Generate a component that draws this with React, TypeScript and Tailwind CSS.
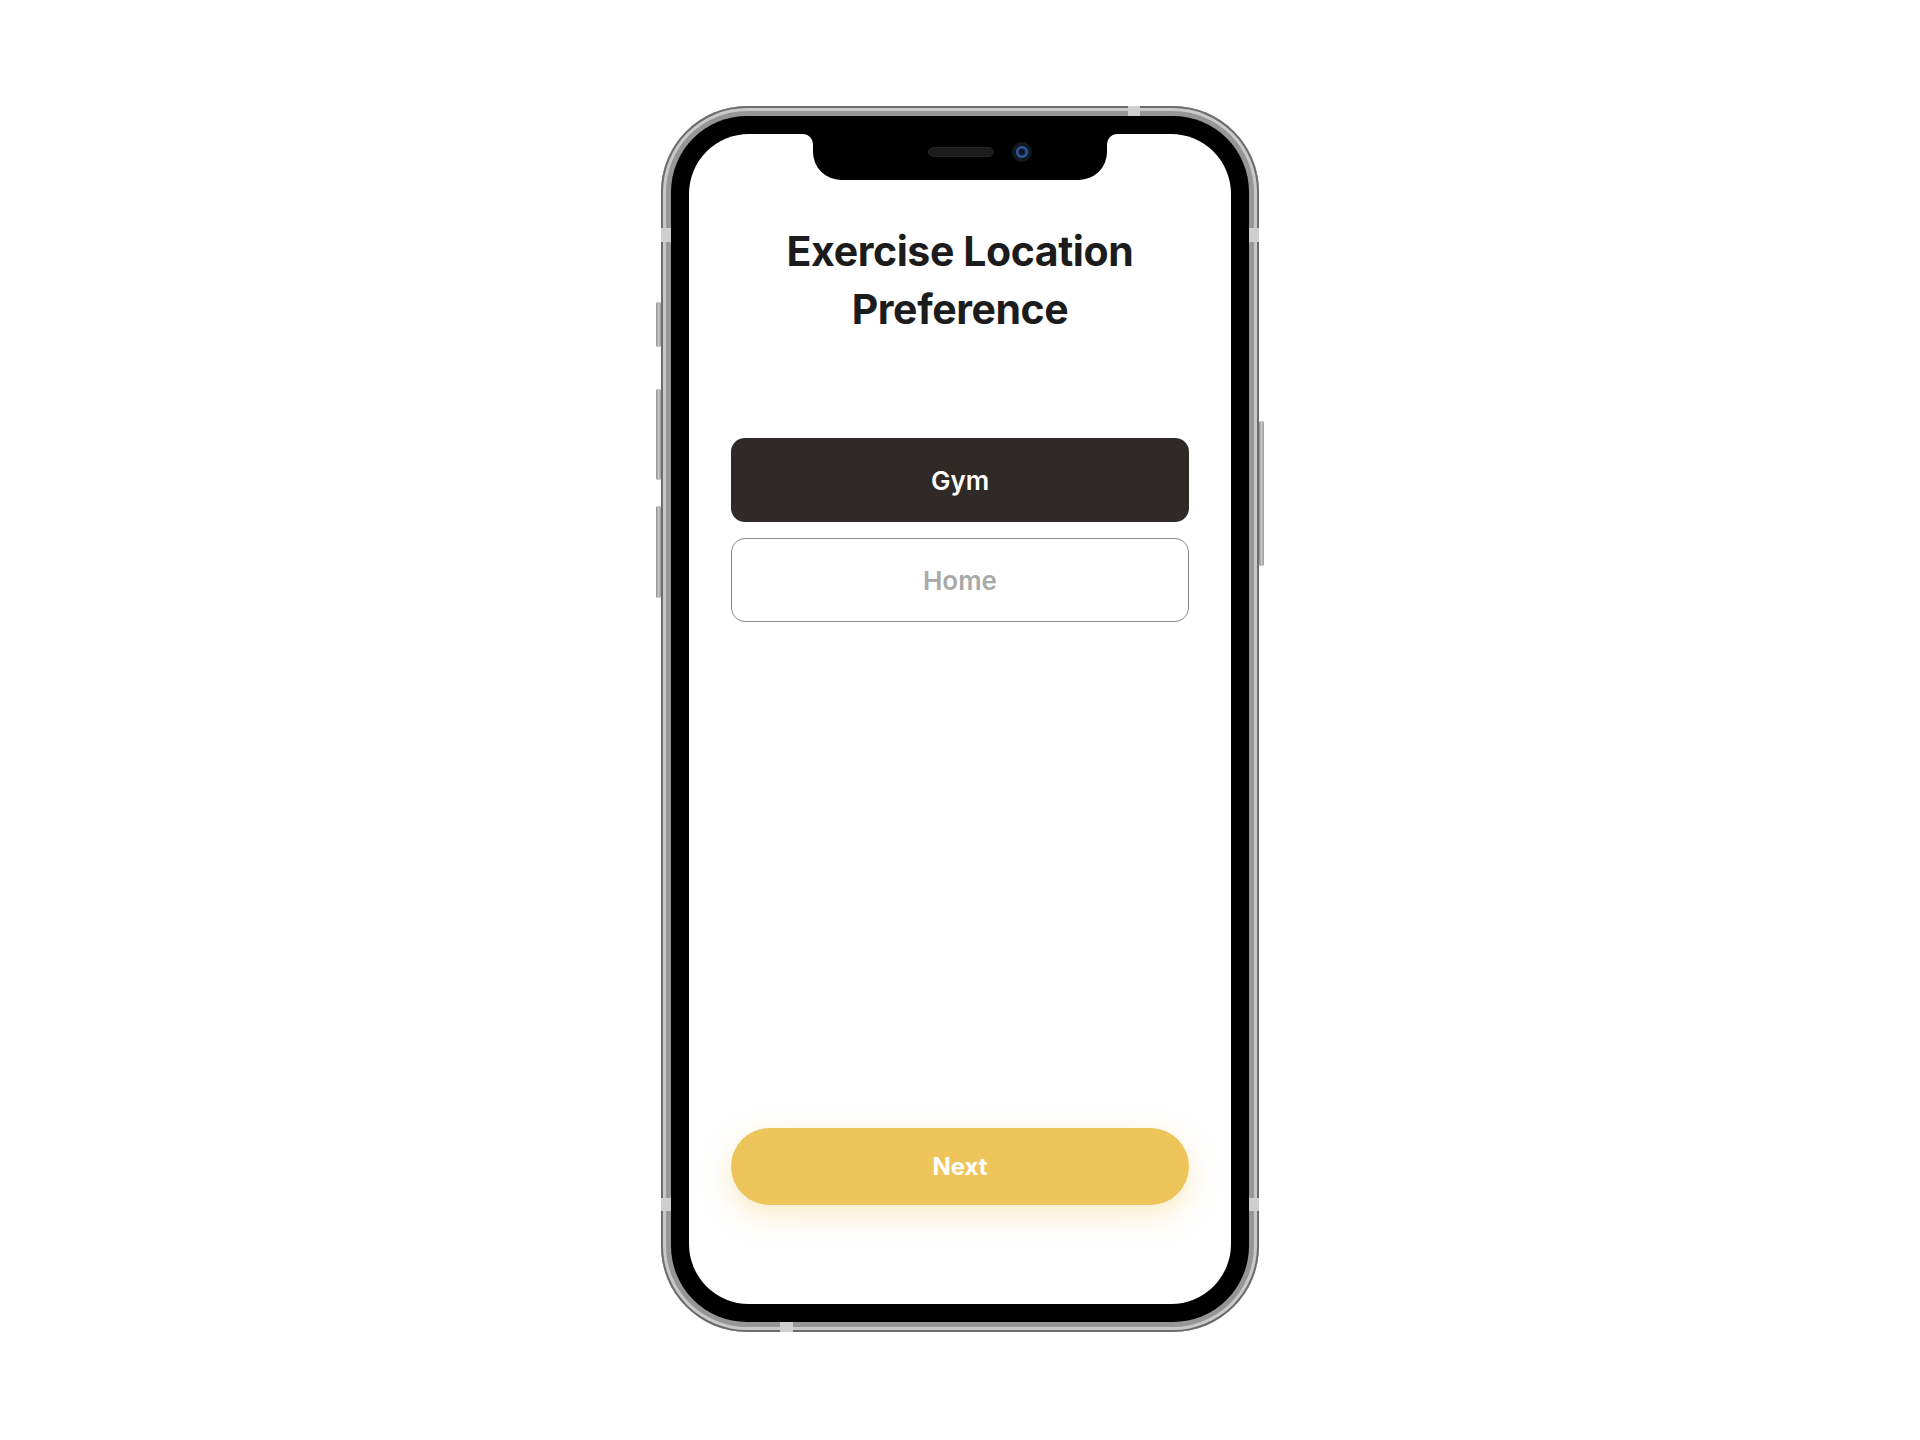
import { useState } from 'react';

const font = { fontFamily: 'Inter, "Noto Sans", sans-serif' };

const SideButton = ({ className }: { className: string }) => (
  <div
    className={`w-[5px] rounded-[2px] bg-gradient-to-r from-[#8c8c8c] via-[#c8c8c8] to-[#9a9a9a] ${className}`}
  />
);

const RimBand = ({ className }: { className: string }) => (
  <div className={`absolute bg-[#cfcfcf] ${className}`} />
);

const Notch = () => (
  <div className="absolute left-1/2 top-0 -translate-x-1/2 w-[294px] h-[46px] bg-black rounded-b-[28px] z-10">
    <div className="absolute -left-[10px] top-0 w-[10px] h-[10px] bg-black">
      <div className="w-full h-full bg-white rounded-tr-[10px]" />
    </div>
    <div className="absolute -right-[10px] top-0 w-[10px] h-[10px] bg-black">
      <div className="w-full h-full bg-white rounded-tl-[10px]" />
    </div>
    <div className="flex items-center pl-[115px] pt-[8px]">
      <div className="w-[66px] h-[10px] rounded-full bg-[#1b1b1b] border border-[#262626]" />
      <div className="ml-[18px] w-[20px] h-[20px] rounded-full bg-[#121721] flex items-center justify-center">
        <div className="w-[12px] h-[12px] rounded-full bg-[radial-gradient(circle,#0b1422_25%,#3164ad_60%,#1d3c6e_100%)]" />
      </div>
    </div>
  </div>
);

export default function App() {
  const [place, setPlace] = useState<'gym' | 'home'>('gym');

  const option = (value: 'gym' | 'home', label: string) =>
    place === value ? (
      <button
        onClick={() => setPlace(value)}
        className="h-[84px] w-full rounded-[14px] bg-[#2f2a27] text-white text-[26px] font-semibold"
      >
        {label}
      </button>
    ) : (
      <button
        onClick={() => setPlace(value)}
        className="h-[84px] w-full rounded-[14px] border-[1.5px] border-[#8a8a8a] bg-white text-[#a9a9a9] text-[26px] font-semibold"
      >
        {label}
      </button>
    );

  return (
    <div className="min-h-screen w-full bg-white flex justify-center items-start pt-[106px]" style={font}>
      {/* volume / silent keys */}
      <div className="flex flex-col pt-[196px]">
        <SideButton className="h-[45px]" />
        <SideButton className="mt-[42px] h-[91px]" />
        <SideButton className="mt-[26px] h-[92px]" />
      </div>

      {/* steel rim */}
      <div className="relative w-[598px] h-[1226px] rounded-[86px] bg-[#969696] p-[10px] shadow-[inset_0_0_0_2px_#6c6c6c,inset_0_0_0_5px_#c9c9c9]">
        <RimBand className="left-[467px] top-0 w-[12px] h-[10px]" />
        <RimBand className="left-[119px] bottom-0 w-[13px] h-[10px]" />
        <RimBand className="left-0 top-[122px] w-[10px] h-[14px]" />
        <RimBand className="left-0 top-[1092px] w-[10px] h-[13px]" />
        <RimBand className="right-0 top-[122px] w-[10px] h-[14px]" />
        <RimBand className="right-0 top-[1092px] w-[10px] h-[13px]" />

        {/* bezel */}
        <div className="w-full h-full rounded-[76px] bg-black p-[18px]">
          {/* screen */}
          <div className="relative w-full h-full rounded-[60px] bg-white overflow-hidden flex flex-col px-[42px] pt-[88px] pb-[99px]">
            <Notch />

            <h1 className="text-center text-[41px] leading-[58px] font-bold tracking-[-0.01em] text-[#1c1c1c]">
              Exercise Location
              <br />
              Preference
            </h1>

            <div className="mt-[100px] flex flex-col gap-[16px]">
              {option('gym', 'Gym')}
              {option('home', 'Home')}
            </div>

            <button className="mt-auto h-[77px] w-full rounded-full bg-[#eec55a] text-white text-[24px] font-bold shadow-[0_10px_28px_rgba(238,197,90,0.35)]">
              Next
            </button>
          </div>
        </div>
      </div>

      {/* power key */}
      <div className="flex flex-col pt-[315px]">
        <SideButton className="w-[4px] h-[145px]" />
      </div>
    </div>
  );
}
